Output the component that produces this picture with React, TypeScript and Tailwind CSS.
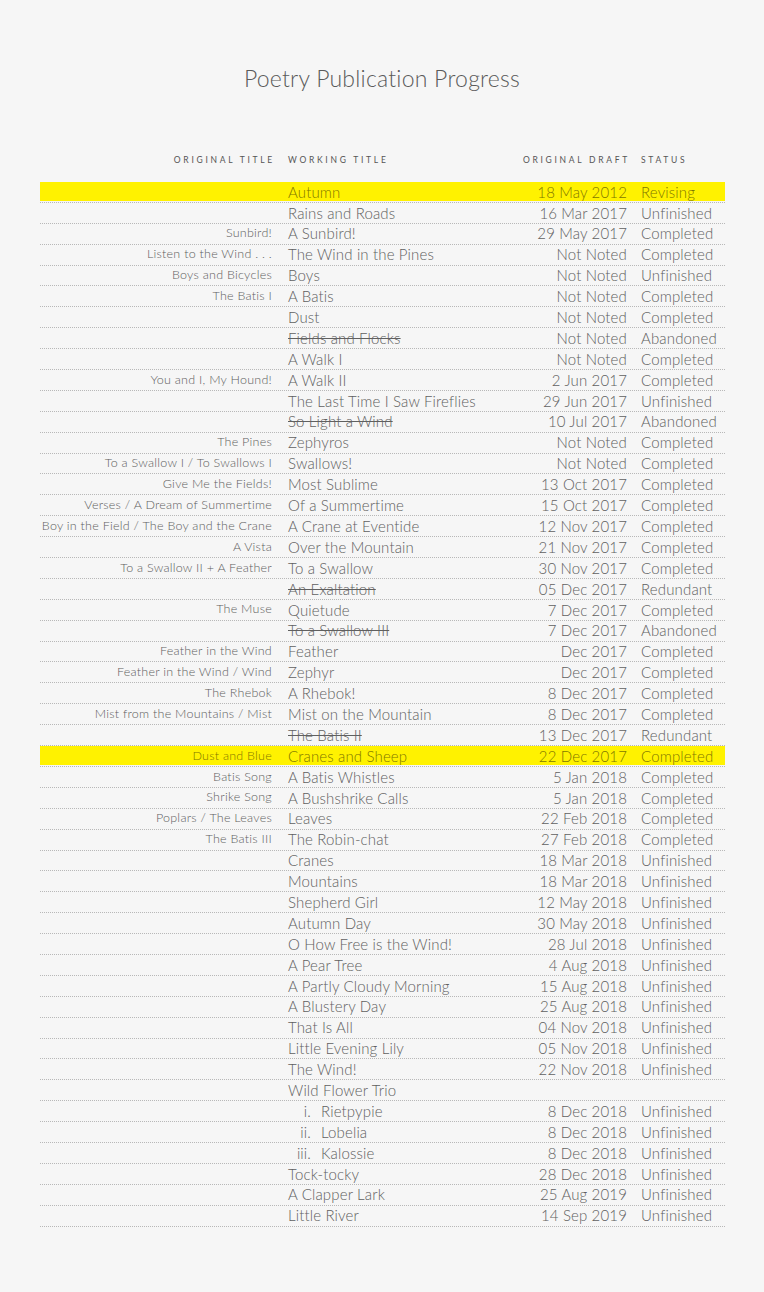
import React from "react";

type Row = {
  orig?: string;
  title: string;
  num?: string;
  date?: string;
  status?: string;
  struck?: boolean;
  hl?: boolean;
};

const rows: Row[] = [
  { title: "Autumn", date: "18 May 2012", status: "Revising", hl: true },
  { title: "Rains and Roads", date: "16 Mar 2017", status: "Unfinished" },
  { orig: "Sunbird!", title: "A Sunbird!", date: "29 May 2017", status: "Completed" },
  { orig: "Listen to the Wind . . .", title: "The Wind in the Pines", date: "Not Noted", status: "Completed" },
  { orig: "Boys and Bicycles", title: "Boys", date: "Not Noted", status: "Unfinished" },
  { orig: "The Batis I", title: "A Batis", date: "Not Noted", status: "Completed" },
  { title: "Dust", date: "Not Noted", status: "Completed" },
  { title: "Fields and Flocks", date: "Not Noted", status: "Abandoned", struck: true },
  { title: "A Walk I", date: "Not Noted", status: "Completed" },
  { orig: "You and I, My Hound!", title: "A Walk II", date: "2 Jun 2017", status: "Completed" },
  { title: "The Last Time I Saw Fireflies", date: "29 Jun 2017", status: "Unfinished" },
  { title: "So Light a Wind", date: "10 Jul 2017", status: "Abandoned", struck: true },
  { orig: "The Pines", title: "Zephyros", date: "Not Noted", status: "Completed" },
  { orig: "To a Swallow I / To Swallows I", title: "Swallows!", date: "Not Noted", status: "Completed" },
  { orig: "Give Me the Fields!", title: "Most Sublime", date: "13 Oct 2017", status: "Completed" },
  { orig: "Verses / A Dream of Summertime", title: "Of a Summertime", date: "15 Oct 2017", status: "Completed" },
  { orig: "Boy in the Field / The Boy and the Crane", title: "A Crane at Eventide", date: "12 Nov 2017", status: "Completed" },
  { orig: "A Vista", title: "Over the Mountain", date: "21 Nov 2017", status: "Completed" },
  { orig: "To a Swallow II + A Feather", title: "To a Swallow", date: "30 Nov 2017", status: "Completed" },
  { title: "An Exaltation", date: "05 Dec 2017", status: "Redundant", struck: true },
  { orig: "The Muse", title: "Quietude", date: "7 Dec 2017", status: "Completed" },
  { title: "To a Swallow III", date: "7 Dec 2017", status: "Abandoned", struck: true },
  { orig: "Feather in the Wind", title: "Feather", date: "Dec 2017", status: "Completed" },
  { orig: "Feather in the Wind / Wind", title: "Zephyr", date: "Dec 2017", status: "Completed" },
  { orig: "The Rhebok", title: "A Rhebok!", date: "8 Dec 2017", status: "Completed" },
  { orig: "Mist from the Mountains / Mist", title: "Mist on the Mountain", date: "8 Dec 2017", status: "Completed" },
  { title: "The Batis II", date: "13 Dec 2017", status: "Redundant", struck: true },
  { orig: "Dust and Blue", title: "Cranes and Sheep", date: "22 Dec 2017", status: "Completed", hl: true },
  { orig: "Batis Song", title: "A Batis Whistles", date: "5 Jan 2018", status: "Completed" },
  { orig: "Shrike Song", title: "A Bushshrike Calls", date: "5 Jan 2018", status: "Completed" },
  { orig: "Poplars / The Leaves", title: "Leaves", date: "22 Feb 2018", status: "Completed" },
  { orig: "The Batis III", title: "The Robin-chat", date: "27 Feb 2018", status: "Completed" },
  { title: "Cranes", date: "18 Mar 2018", status: "Unfinished" },
  { title: "Mountains", date: "18 Mar 2018", status: "Unfinished" },
  { title: "Shepherd Girl", date: "12 May 2018", status: "Unfinished" },
  { title: "Autumn Day", date: "30 May 2018", status: "Unfinished" },
  { title: "O How Free is the Wind!", date: "28 Jul 2018", status: "Unfinished" },
  { title: "A Pear Tree", date: "4 Aug 2018", status: "Unfinished" },
  { title: "A Partly Cloudy Morning", date: "15 Aug 2018", status: "Unfinished" },
  { title: "A Blustery Day", date: "25 Aug 2018", status: "Unfinished" },
  { title: "That Is All", date: "04 Nov 2018", status: "Unfinished" },
  { title: "Little Evening Lily", date: "05 Nov 2018", status: "Unfinished" },
  { title: "The Wind!", date: "22 Nov 2018", status: "Unfinished" },
  { title: "Wild Flower Trio" },
  { num: "i.", title: "Rietpypie", date: "8 Dec 2018", status: "Unfinished" },
  { num: "ii.", title: "Lobelia", date: "8 Dec 2018", status: "Unfinished" },
  { num: "iii.", title: "Kalossie", date: "8 Dec 2018", status: "Unfinished" },
  { title: "Tock-tocky", date: "28 Dec 2018", status: "Unfinished" },
  { title: "A Clapper Lark", date: "25 Aug 2019", status: "Unfinished" },
  { title: "Little River", date: "14 Sep 2019", status: "Unfinished" },
];

export default function App() {
  return (
    <div
      className="min-h-[1292px] w-[764px] bg-[#f6f6f6] text-[#606060]"
      style={{ fontFamily: "Lato, 'Open Sans', sans-serif" }}
    >
      <h1 className="pt-[63px] text-center text-[23px] font-light leading-[30px] tracking-[0.01em] text-[#5a5a5a]">
        Poetry Publication Progress
      </h1>

      <div className="mx-[40px] mt-[59px] w-[685px]">
        {/* header */}
        <div className="flex h-[16px] items-center text-[8.5px] uppercase tracking-[0.32em] text-[#555]">
          <span className="-mr-[3px] w-[235px] text-right">Original Title</span>
          <span className="ml-[16px] w-[229px]">Working Title</span>
          <span className="-mr-[3px] w-[113px] text-right">Original Draft</span>
          <span className="ml-[14px]">Status</span>
        </div>

        <div className="mt-[14px]">
          {rows.map((r, i) => (
            <div
              key={i}
              className="flex h-[20.9px] items-center border-b border-dotted border-[#b8b8b8]"
            >
              <div
                className={`flex h-[19px] w-full items-center ${
                  r.hl ? "bg-[#fff200] text-[#7f7700]" : ""
                }`}
              >
                <span className="w-[232px] truncate text-right text-[12.5px] font-light tracking-[0.02em]">
                  {r.orig}
                </span>
                <span
                  className={`ml-[16px] flex w-[229px] text-[15px] font-light tracking-[0.01em] ${
                    r.struck ? "line-through decoration-[#606060]" : ""
                  }`}
                >
                  {r.num && (
                    <span className="mr-[10px] w-[23px] text-right">{r.num}</span>
                  )}
                  {r.title}
                </span>
                <span className="w-[110px] text-right text-[15px] font-light tracking-[0.01em]">
                  {r.date}
                </span>
                <span className="ml-[14px] text-[15px] font-light tracking-[0.01em]">
                  {r.status}
                </span>
              </div>
            </div>
          ))}
        </div>
      </div>
    </div>
  );
}
